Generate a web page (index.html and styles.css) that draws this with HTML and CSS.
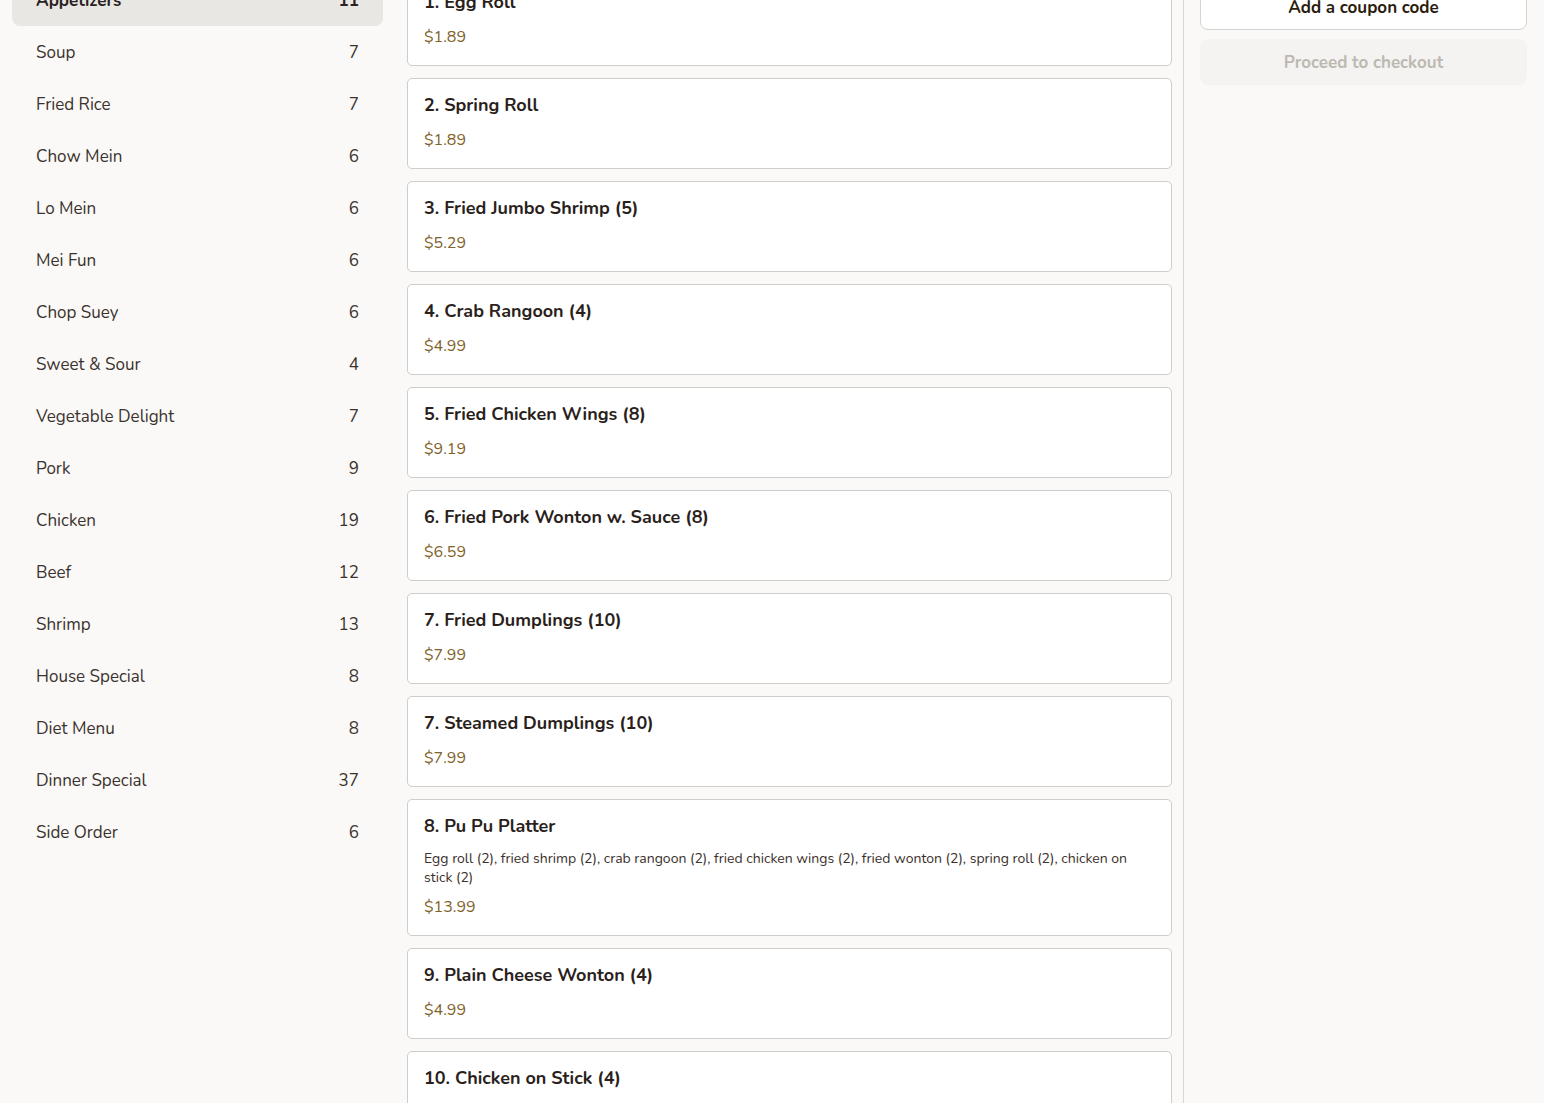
FILE: index.html
```html
<!DOCTYPE html>
<html lang="en">
<head>
<meta charset="utf-8">
<title>Menu</title>
<link rel="stylesheet" href="styles.css">
</head>
<body>
<div class="page">
  <aside class="sidebar">
    <ul class="cats">
      <li class="cat active"><span>Appetizers</span><span>11</span></li>
      <li class="cat"><span>Soup</span><span>7</span></li>
      <li class="cat"><span>Fried Rice</span><span>7</span></li>
      <li class="cat"><span>Chow Mein</span><span>6</span></li>
      <li class="cat"><span>Lo Mein</span><span>6</span></li>
      <li class="cat"><span>Mei Fun</span><span>6</span></li>
      <li class="cat"><span>Chop Suey</span><span>6</span></li>
      <li class="cat"><span>Sweet &amp; Sour</span><span>4</span></li>
      <li class="cat"><span>Vegetable Delight</span><span>7</span></li>
      <li class="cat"><span>Pork</span><span>9</span></li>
      <li class="cat"><span>Chicken</span><span>19</span></li>
      <li class="cat"><span>Beef</span><span>12</span></li>
      <li class="cat"><span>Shrimp</span><span>13</span></li>
      <li class="cat"><span>House Special</span><span>8</span></li>
      <li class="cat"><span>Diet Menu</span><span>8</span></li>
      <li class="cat"><span>Dinner Special</span><span>37</span></li>
      <li class="cat"><span>Side Order</span><span>6</span></li>
    </ul>
  </aside>
  <main class="menu">
    <div class="card"><div class="title">1. Egg Roll</div><div class="price">$1.89</div></div>
    <div class="card"><div class="title">2. Spring Roll</div><div class="price">$1.89</div></div>
    <div class="card"><div class="title">3. Fried Jumbo Shrimp (5)</div><div class="price">$5.29</div></div>
    <div class="card"><div class="title">4. Crab Rangoon (4)</div><div class="price">$4.99</div></div>
    <div class="card"><div class="title">5. Fried Chicken Wings (8)</div><div class="price">$9.19</div></div>
    <div class="card"><div class="title">6. Fried Pork Wonton w. Sauce (8)</div><div class="price">$6.59</div></div>
    <div class="card"><div class="title">7. Fried Dumplings (10)</div><div class="price">$7.99</div></div>
    <div class="card"><div class="title">7. Steamed Dumplings (10)</div><div class="price">$7.99</div></div>
    <div class="card"><div class="title">8. Pu Pu Platter</div><div class="desc">Egg roll (2), fried shrimp (2), crab rangoon (2), fried chicken wings (2), fried wonton (2), spring roll (2), chicken on stick (2)</div><div class="price">$13.99</div></div>
    <div class="card"><div class="title">9. Plain Cheese Wonton (4)</div><div class="price">$4.99</div></div>
    <div class="card"><div class="title">10. Chicken on Stick (4)</div><div class="price">$4.99</div></div>
  </main>
  <aside class="cart">
    <button class="btn coupon">Add a coupon code</button>
    <button class="btn checkout">Proceed to checkout</button>
  </aside>
</div>
</body>
</html>
```

FILE: styles.css
```css
* { box-sizing: border-box; }
html, body {
  margin: 0;
  padding: 0;
  background: #faf9f7;
  font-family: "Nunito", "Lato", "Noto Sans", sans-serif;
  color: #2b221f;
  overflow: hidden;
  height: 1103px;
}
.page {
  display: grid;
  grid-template-columns: 395px 788px 1fr;
  margin-top: -40px;
  min-height: 1200px;
}
.sidebar {
  padding: 14px 12px 12px;
}
.cats {
  list-style: none;
  margin: 0;
  padding: 0;
}
.cat {
  display: flex;
  justify-content: space-between;
  align-items: center;
  height: 52px;
  padding: 0 24px;
  font-size: 17px;
  color: #3a322e;
  border-radius: 8px;
}
.cat.active {
  background: #e8e7e4;
  font-weight: 700;
  color: #2b221f;
}
.menu {
  padding: 15px 11px 15px 12px;
  display: flex;
  flex-direction: column;
  gap: 12px;
}
.card {
  background: #fff;
  border: 1px solid #cfcdca;
  border-radius: 5px;
  padding: 15px 16px 16px;
}
.title {
  font-size: 18px;
  line-height: 22px;
  font-weight: 700;
  color: #2b1f1c;
}
.desc {
  margin-top: 12px;
  font-size: 14px;
  line-height: 19px;
  color: #3a2f2b;
}
.price {
  margin-top: 12px;
  font-size: 16px;
  line-height: 24px;
  color: #80622a;
}
.desc + .price { margin-top: 8px; }
.cart {
  border-left: 1px solid #d9d7d3;
  padding: 24px 17px 0 16px;
  display: flex;
  flex-direction: column;
  gap: 9px;
}
.btn {
  font-family: inherit;
  height: 46px;
  border-radius: 8px;
  font-size: 17px;
  font-weight: 700;
  width: 100%;
}
.coupon {
  background: #fff;
  border: 1px solid #d6d4d0;
  color: #2b1d0e;
}
.checkout {
  background: #f4f3f1;
  border: none;
  color: #bdb9b2;
}
```
